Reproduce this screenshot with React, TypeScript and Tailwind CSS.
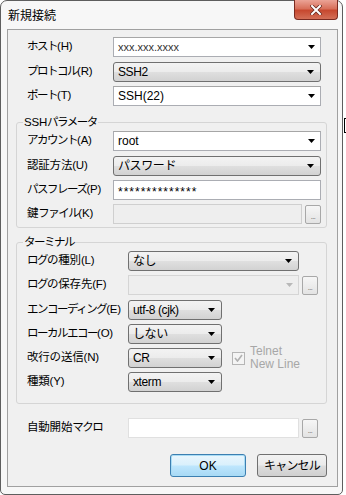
import type { ReactNode } from "react";

const FONT = { fontFamily: '"Liberation Sans", "Noto Sans CJK JP", sans-serif' };

function Arrow({ disabled }: { disabled?: boolean }) {
  return (
    <svg width="7" height="4" viewBox="0 0 7 4" className="shrink-0">
      <path d="M0 0h7L3.5 4z" fill={disabled ? "#b8b8b8" : "#000"} />
    </svg>
  );
}

function EditCombo({ value, small }: { value: string; small?: boolean }) {
  return (
    <div className="flex h-[20px] flex-1 items-center justify-between border border-[#abadb3] border-t-[#a6a6a6] bg-white pl-[4px] pr-[5px]">
      <span className={small ? "text-[11px] text-[#333]" : "text-[12px]"}>{value}</span>
      <Arrow />
    </div>
  );
}

function DropList({ value, w }: { value: string; w: string }) {
  return (
    <div
      className={`flex h-[20px] ${w} items-center justify-between rounded-[3px] border border-[#707070] bg-[linear-gradient(#f3f3f3_0%,#ececec_48%,#dfdfdf_52%,#d2d2d2_100%)] pl-[4px] pr-[6px]`}
    >
      <span className="whitespace-nowrap text-[12px] tracking-[-0.4px]">{value}</span>
      <Arrow />
    </div>
  );
}

function Dots() {
  return (
    <div className="ml-[3px] flex h-[19px] w-[16px] shrink-0 items-end justify-center rounded-[2px] border border-[#a8a8a8] bg-[linear-gradient(#f6f6f6,#e3e3e3)] pb-[3px]">
      <span className="text-[7px] leading-none tracking-[-0.5px] text-[#555]">...</span>
    </div>
  );
}

// katakana runs get squeezed (the original UI font has narrow kana), the rest stays as is
function Label({ text }: { text: string }) {
  const parts = text.match(/[\u30a0-\u30ff]+|[^\u30a0-\u30ff]+/g) ?? [text];
  return (
    <>
      {parts.map((p, i) => (
        <span key={i} className={/[\u30a0-\u30ff]/.test(p) ? "tracking-[-1.5px]" : "tracking-[-0.2px]"}>
          {p}
        </span>
      ))}
    </>
  );
}

function Row({ label, lw, mt, children }: { label: string; lw: string; mt: string; children: ReactNode }) {
  return (
    <div className={`flex h-[20px] items-center ${mt}`}>
      <span className={`${lw} shrink-0 whitespace-nowrap text-[11.5px]`}>
        <Label text={label} />
      </span>
      {children}
    </div>
  );
}

function Group({ title, className, children }: { title: string; className: string; children: ReactNode }) {
  return (
    <fieldset className={`ml-[8px] mr-[10px] rounded-[3px] border border-[#d5d5d5] pl-[10px] pr-[5px] ${className}`}>
      <legend className="ml-[-4px] px-[1px] text-[11.5px] leading-[16px]">
        <Label text={title} />
      </legend>
      {children}
    </fieldset>
  );
}

export default function App() {
  return (
    <div className="flex h-[495px] w-[346px] bg-white text-black" style={FONT}>
      <div className="flex h-[495px] w-[343px] shrink-0 flex-col rounded-t-[7px] rounded-b-[5px] border border-[#5e5e5e] bg-[#f7f7f7]">
        {/* title bar */}
        <div className="flex h-[28px] shrink-0 items-start justify-between">
          <span className="mt-[6px] ml-[7px] text-[12px]">新規接続</span>
          <div className="mr-[4px] mt-[-1px] flex h-[20px] w-[44px] items-center justify-center rounded-b-[4px] border border-t-0 border-[#7a2a20] bg-[linear-gradient(#eba396_0%,#d8705b_45%,#c7482f_55%,#d36f57_100%)]">
            <svg width="12" height="10" viewBox="0 0 12 10">
              <path d="M2 1l8 8M10 1L2 9" stroke="#6a2a20" strokeWidth="3.6" strokeLinecap="square" />
              <path d="M2 1l8 8M10 1L2 9" stroke="#fff" strokeWidth="2" strokeLinecap="square" />
            </svg>
          </div>
        </div>

        {/* client area */}
        <div className="ml-[6px] mr-[4px] flex h-[458px] shrink-0 flex-col border border-[#a0a0a0] bg-[#f0f0f0]">
          <div className="pl-[19px] pr-[16px]">
            <Row label="ホスト(H)" lw="w-[86px]" mt="mt-[7px]">
              <EditCombo value="xxx.xxx.xxxx" small />
            </Row>
            <Row label="プロトコル(R)" lw="w-[86px]" mt="mt-[5px]">
              <DropList value="SSH2" w="flex-1" />
            </Row>
            <Row label="ポート(T)" lw="w-[86px]" mt="mt-[4px]">
              <EditCombo value="SSH(22)" />
            </Row>
          </div>

          <Group title="SSHパラメータ" className="mt-[8px] pb-[3px]">
            <Row label="アカウント(A)" lw="w-[86px]" mt="mt-[1px]">
              <EditCombo value="root" />
            </Row>
            <Row label="認証方法(U)" lw="w-[86px]" mt="mt-[5px]">
              <DropList value="パスワード" w="flex-1" />
            </Row>
            <Row label="パスフレーズ(P)" lw="w-[86px]" mt="mt-[4px]">
              <div className="flex h-[20px] flex-1 items-center border border-[#abadb3] bg-white pl-[4px]">
                <span className="pt-[3px] text-[12px] tracking-[1px]">**************</span>
              </div>
            </Row>
            <Row label="鍵ファイル(K)" lw="w-[86px]" mt="mt-[4px]">
              <div className="h-[20px] flex-1 border border-[#cfcfcf] bg-[#eeeeee]" />
              <Dots />
            </Row>
          </Group>

          <Group title="ターミナル" className="mt-[6px] pb-[11px]">
            <Row label="ログの種別(L)" lw="w-[101px]" mt="mt-[1px]">
              <DropList value="なし" w="w-[171px]" />
            </Row>
            <Row label="ログの保存先(F)" lw="w-[101px]" mt="mt-[4px]">
              <div className="flex h-[20px] w-[171px] items-center justify-end border border-[#d5d5d5] bg-[#eeeeee] pr-[5px]">
                <Arrow disabled />
              </div>
              <Dots />
            </Row>
            <Row label="エンコーディング(E)" lw="w-[101px]" mt="mt-[5px]">
              <DropList value="utf-8 (cjk)" w="w-[94px]" />
            </Row>
            <Row label="ローカルエコー(O)" lw="w-[101px]" mt="mt-[4px]">
              <DropList value="しない" w="w-[94px]" />
            </Row>
            <Row label="改行の送信(N)" lw="w-[101px]" mt="mt-[4px]">
              <DropList value="CR" w="w-[94px]" />
              <div className="ml-[10px] flex items-center gap-[5px]">
                <div className="flex h-[13px] w-[13px] items-center justify-center border border-[#b5b5b5] bg-[#f4f4f4]">
                  <svg width="9" height="8" viewBox="0 0 9 8">
                    <path d="M1 4l2.5 3L8 1" stroke="#b0b0b0" strokeWidth="1.6" fill="none" />
                  </svg>
                </div>
                <div className="flex flex-col text-[12px] leading-[13px] text-[#a7a7a7]">
                  <span>Telnet</span>
                  <span>New Line</span>
                </div>
              </div>
            </Row>
            <Row label="種類(Y)" lw="w-[101px]" mt="mt-[4px]">
              <DropList value="xterm" w="w-[94px]" />
            </Row>
          </Group>

          <div className="pl-[19px] pr-[16px]">
            <Row label="自動開始マクロ" lw="w-[101px]" mt="mt-[14px]">
              <div className="h-[20px] w-[171px] border border-[#e0e0e0] bg-white" />
              <Dots />
            </Row>
          </div>
          <div className="mt-[16px] flex justify-end gap-[11px] pr-[10px]">
            <button className="flex h-[23px] w-[76px] items-center justify-center rounded-[3px] border border-[#3c7fb1] bg-[linear-gradient(#eaf6fd_0%,#d9f0fc_48%,#bee6fd_52%,#a7d9f5_100%)] text-[12px] shadow-[inset_0_0_0_1px_#a9dcf5]">
              OK
            </button>
            <button className="flex h-[23px] w-[70px] items-center justify-center rounded-[3px] border border-[#707070] bg-[linear-gradient(#f2f2f2_0%,#ebebeb_48%,#dddddd_52%,#cfcfcf_100%)] text-[12px] tracking-[-0.8px]">
              キャンセル
            </button>
          </div>
        </div>
      </div>
      <div className="flex flex-1 flex-col">
        <div className="ml-[1px] mt-[118px] h-[15px] border-y border-l border-black" />
      </div>
    </div>
  );
}
